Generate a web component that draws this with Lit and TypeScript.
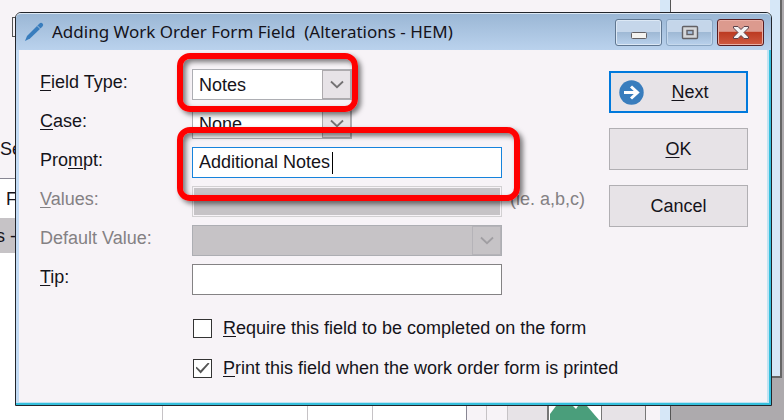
import { LitElement, html, css } from "lit";
import { customElement, state } from "lit/decorators.js";

@customElement("app-root")
export class AppRoot extends LitElement {
  @state() private prompt = "Additional Notes";

  static styles = css`
    :host {
      display: block;
      position: relative;
      min-height: 100vh;
      overflow: hidden;
      background: #adaaad;
      color: #15131a;
      font: 18px/26px "Liberation Sans", Arial, sans-serif;
    }
    * { box-sizing: border-box; }
    .back {
      position: absolute;
      inset: 0 2px auto auto;
      width: 113px;
      height: 378px;
      background: #f7f3f7;
      border: 1px solid #666;
      border-width: 0 2px 2px 0;
    }
    .back::after {
      content: "";
      position: absolute;
      inset: 0 0 0 auto;
      width: 10px;
      background: #d6e7f7;
    }
    .front {
      position: absolute;
      inset: 0 113px 0 0;
      display: flex;
      flex-direction: column;
      background: #f7f3f7;
      border-right: 1px solid #555;
    }
    .front::after {
      content: "";
      position: absolute;
      inset: 0 0 0 auto;
      width: 10px;
      background: #d6e7f7;
    }
    .tick {
      position: absolute;
      left: 12px;
      top: 17px;
      width: 20px;
      height: 20px;
      border: 1px solid #555;
    }
    .heading { height: 178px; padding-top: 136px; }
    .list { border-top: 1px solid #888693; background: #fff; height: 228px; width: 466px; }
    .head { height: 39px; padding: 7px 6px; }
    .selected { height: 35px; background: #c6c3c6; padding-top: 5px; white-space: nowrap; text-indent: -4px; }
    .strip { display: flex; flex: 1; }
    .cell { border-right: 1px solid #c6c3c6; background: #fff; }
    .tile { background: #e7e3e7; border-right: 1px solid #777; }
    .pale { background: #f7f3f7; }
    .w163 { width: 163px; }
    .w145 { width: 145px; }
    .w65 { width: 65px; }
    .w94 { width: 94px; border-color: #888693; }
    .w20 { width: 20px; }
    .w21 { width: 21px; }
    .w41 { width: 41px; border-right: 2px solid #777; }
    .w53 { width: 53px; border-right: 1px solid #777; }
    .w44 { width: 44px; }
    .strip svg { display: block; width: 100%; height: 14px; }

    .dialog {
      position: absolute;
      inset: 12px 12px auto 15px;
      border: 1px solid #22252b;
      border-radius: 6px 6px 0 0;
      background: #f7f3f7;
      box-shadow: inset -2px -2px #35bfdc, inset 3px 0 #c4dcf5, inset -4px -3px #bfe3f3;
      padding-bottom: 24px;
    }
    .title {
      display: flex;
      align-items: center;
      height: 37px;
      padding: 0 7px 0 8px;
      border-top: 1px solid #dce8f4;
      border-radius: 5px 5px 0 0;
      background: linear-gradient(#9bb7d5, #bad2ed);
    }
    h1 {
      flex: 1;
      margin: 0 0 0 8px;
      font: 17px/28px "Noto Sans", "Open Sans", sans-serif;
      white-space: pre;
    }
    .controls { display: flex; gap: 4px; }
    .controls button {
      width: 47px;
      height: 27px;
      padding: 0;
      border: 1px solid #5f7690;
      border-radius: 3px;
      background: linear-gradient(#c5d6ea 48%, #9fb9d5 50%, #b9d1ec);
      box-shadow: inset 0 0 0 1px #dce8f5;
    }
    .controls .max { border-color: #8aa5c2; box-shadow: inset 0 0 0 1px #c6d9ed; }
    .controls .close {
      border-color: #571c20;
      background: linear-gradient(#dc9a8e 45%, #bd3b22 50%, #cf5a40);
      box-shadow: inset 0 0 0 1px #e9aea4;
    }
    .controls svg { display: block; margin: auto; }

    .content {
      display: flex;
      justify-content: space-between;
      align-items: flex-start;
      padding: 19px 23px 0 24px;
    }
    .form { flex: 1; min-width: 0; }
    .fields { display: grid; row-gap: 8px; }
    .field { display: grid; grid-template-columns: 152px 310px auto; height: 31px; }
    .field.off { color: #848184; }
    .hint { padding-left: 8px; line-height: 26px; color: #848184; }
    u { text-decoration-thickness: 1px; text-underline-offset: 2px; }
    input, select, button { font: inherit; color: inherit; }
    .box {
      width: 100%;
      height: 31px;
      margin: 0;
      padding: 0 6px;
      border: 1px solid #848284;
      border-radius: 0;
      background: #fff;
      outline: none;
    }
    .active { border: 1px solid #1683dc; }
    .box.grey {
      background: #c6c3c6;
      border: 1px solid #d2d0d2;
      box-shadow: inset 0 0 0 1px #f7f3f7;
    }
    .combo { position: relative; }
    .combo.short { width: 160px; }
    .combo select { appearance: none; border: 1px solid #adaeb3; opacity: 1; }
    .combo select:disabled { background: #c6c3c6; }
    .drop {
      position: absolute;
      inset: 1px 1px 1px auto;
      width: 29px;
      display: grid;
      place-items: center;
      border: 1px solid #adaaad;
      background: #e7e3e7;
      color: #737173;
      pointer-events: none;
    }
    .off .drop { background: #c6c3c6; border-color: #b5b3b8; color: #a09ea2; }
    .typed { position: relative; }
    .caret { position: absolute; left: 140px; top: 5px; width: 1px; height: 22px; background: #000; }

    .ring {
      position: absolute;
      z-index: 1;
      border: 6px solid #f00;
      border-radius: 13px;
      pointer-events: none;
      box-shadow: 3px 3px 5px rgba(0, 0, 0, 0.5), inset 3px 3px 5px rgba(0, 0, 0, 0.5);
    }
    .ring.one { inset: -16px -6px -12px -15px; }
    .ring.two { inset: -20px -18px -23px -15px; }

    .checks { display: grid; gap: 14px; margin: 20px 0 0 153px; }
    .check { display: flex; align-items: center; gap: 11px; height: 26px; white-space: nowrap; }
    .check input {
      appearance: none;
      display: grid;
      flex: none;
      place-items: center;
      width: 19px;
      height: 19px;
      margin: 0;
      border: 1px solid #333;
      background: #fff;
    }
    .check input:checked::before {
      content: "";
      width: 14px;
      height: 11px;
      background: #555;
      clip-path: polygon(0 48%, 8% 38%, 36% 72%, 90% 0, 100% 9%, 37% 100%);
    }
    .actions { display: grid; flex: none; gap: 15px; width: 139px; margin-top: 2px; }
    .actions button {
      height: 42px;
      padding: 0;
      border: 1px solid #b1afb3;
      background: #e7e3e7;
    }
    .actions .next {
      display: grid;
      grid-template-columns: 25px 1fr;
      align-items: center;
      padding: 0 10px 0 8px;
      border: 2px solid #0079dc;
    }
  `;

  private drop() {
    return html`<span class="drop"><svg width="14" height="9" viewBox="0 0 14 9" aria-hidden="true">
      <path d="M1 1.5 7 7.2 13 1.5" fill="none" stroke="currentColor" stroke-width="1.8" /></svg></span>`;
  }

  render() {
    return html`
      <div class="back"></div>
      <div class="front">
        <span class="tick"></span>
        <div class="heading">Se</div>
        <div class="list">
          <div class="head">F</div>
          <div class="selected">s -</div>
        </div>
        <div class="strip">
          <div class="cell w163"></div><div class="cell w145"></div><div class="cell w65"></div>
          <div class="cell w94"></div><div class="cell pale w20"></div><div class="cell pale w21"></div>
          <div class="tile w41"></div>
          <div class="cell w53"><svg viewBox="0 0 52 14" preserveAspectRatio="none">
            <path d="M1 14V8L7 0H38L50 14Z" fill="#4a9e7b" /><path d="M24 0h5l-2 3z" fill="#fff" /></svg></div>
          <div class="tile w44"></div>
        </div>
      </div>

      <form class="dialog" @submit=${(e: Event) => e.preventDefault()}>
        <header class="title">
          <svg width="20" height="20" viewBox="0 0 20 20" aria-hidden="true">
            <path d="M1 19 3 14 15 2q2-2 3.5-.5T18 5L6 16.500Z" fill="#397dbd" />
            <path d="M13 3.500 16.500 7" stroke="#a8c2de" stroke-width="1" />
          </svg>
          <h1>Adding Work Order Form Field  (Alterations - HEM)</h1>
          <div class="controls">
            <button type="button" aria-label="Minimize"><svg width="18" height="25" viewBox="0 0 18 25">
              <rect x="1.500" y="12.500" width="15" height="6" rx="1" fill="#f4f3f0" stroke="#626064" /></svg></button>
            <button type="button" class="max" aria-label="Maximize"><svg width="18" height="25" viewBox="0 0 18 25">
              <rect x="1.500" y="6.500" width="15" height="12" rx="1" fill="#d5d7da" stroke="#626064" stroke-width="1.400" />
              <rect x="6" y="10.500" width="6" height="4" fill="#a8c0dc" stroke="#626064" stroke-width="1.400" /></svg></button>
            <button type="button" class="close" aria-label="Close"><svg width="18" height="25" viewBox="0 0 18 25">
              <path d="M1.500 6.500H6L9 9.500 12 6.500H16.500V8L12 12.500 16.500 17V18.500H12L9 15.500 6 18.500H1.500V17L6 12.500 1.500 8Z" fill="#f5f3f3" stroke="#5c4249" /></svg></button>
          </div>
        </header>

        <div class="content">
          <div class="form">
            <div class="fields">
              <div class="field">
                <label for="type"><u>F</u>ield Type:</label>
                <div class="combo short">
                  <select id="type" class="box"><option>Notes</option></select>${this.drop()}
                  <span class="ring one"></span>
                </div>
              </div>
              <div class="field">
                <label for="case"><u>C</u>ase:</label>
                <div class="combo short">
                  <select id="case" class="box"><option>None</option></select>${this.drop()}
                </div>
              </div>
              <div class="field">
                <label for="prompt">Pro<u>m</u>pt:</label>
                <div class="typed">
                  <input id="prompt" class="box active" .value=${this.prompt}
                    @input=${(e: Event) => (this.prompt = (e.target as HTMLInputElement).value)} />
                  <span class="caret"></span>
                  <span class="ring two"></span>
                </div>
              </div>
              <div class="field off">
                <label for="values"><u>V</u>alues:</label>
                <input id="values" class="box grey" disabled />
                <span class="hint">(ie. a,b,c)</span>
              </div>
              <div class="field off">
                <label for="default">Default Value:</label>
                <div class="combo"><select id="default" class="box" disabled></select>${this.drop()}</div>
              </div>
              <div class="field">
                <label for="tip"><u>T</u>ip:</label>
                <input id="tip" class="box" />
              </div>
            </div>
            <div class="checks">
              <label class="check"><input type="checkbox" /><span><u>R</u>equire this field to be completed on the form</span></label>
              <label class="check"><input type="checkbox" checked /><span><u>P</u>rint this field when the work order form is printed</span></label>
            </div>
          </div>
          <div class="actions">
            <button type="button" class="next">
              <svg width="25" height="25" viewBox="0 0 25 25" aria-hidden="true">
                <circle cx="12.500" cy="12.500" r="12.200" fill="#397dbd" />
                <path d="M5 12.500H18M12 6.500 18.500 12.500 12 18.500" fill="none" stroke="#fff" stroke-width="3" />
              </svg>
              <span><u>N</u>ext</span>
            </button>
            <button type="submit"><u>O</u>K</button>
            <button type="button">Cancel</button>
          </div>
        </div>
      </form>
    `;
  }
}
